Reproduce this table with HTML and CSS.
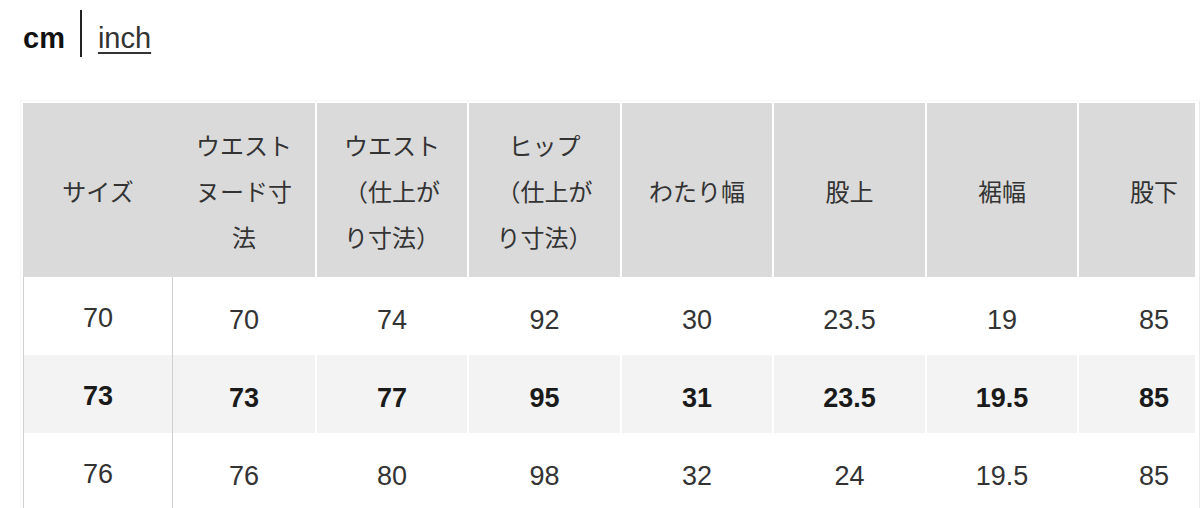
FILE: index.html
```html
<!DOCTYPE html>
<html lang="ja">
<head>
<meta charset="utf-8">
<title>サイズ表</title>
<link rel="stylesheet" href="styles.css">
</head>
<body>
<div class="unit-switch">
  <span class="unit unit-active">cm</span>
  <span class="unit-divider"></span>
  <a class="unit unit-link" href="#">inch</a>
</div>
<div class="table-frame">
  <div class="table-wrap">
    <table class="size-table">
      <colgroup>
        <col class="c-size">
        <col class="c-w2">
        <col class="c-a">
        <col class="c-b">
        <col class="c-a">
        <col class="c-b">
        <col class="c-a">
        <col class="c-a">
      </colgroup>
      <thead>
        <tr>
          <th class="first">サイズ</th>
          <th>ウエスト<br>ヌード寸<br>法</th>
          <th>ウエスト<br>（仕上が<br>り寸法）</th>
          <th>ヒップ<br>（仕上が<br>り寸法）</th>
          <th>わたり幅</th>
          <th>股上</th>
          <th>裾幅</th>
          <th>股下</th>
        </tr>
      </thead>
      <tbody>
        <tr>
          <td class="first">70</td><td>70</td><td>74</td><td>92</td><td>30</td><td>23.5</td><td>19</td><td>85</td>
        </tr>
        <tr class="current">
          <td class="first">73</td><td>73</td><td>77</td><td>95</td><td>31</td><td>23.5</td><td>19.5</td><td>85</td>
        </tr>
        <tr>
          <td class="first">76</td><td>76</td><td>80</td><td>98</td><td>32</td><td>24</td><td>19.5</td><td>85</td>
        </tr>
      </tbody>
    </table>
  </div>
</div>
</body>
</html>
```

FILE: styles.css
```css
html, body {
  margin: 0;
  padding: 0;
  background: #ffffff;
}

body {
  font-family: "Liberation Sans", "Noto Sans CJK JP", sans-serif;
  color: #333333;
  width: 1200px;
  height: 508px;
  overflow: hidden;
}

.unit-switch {
  display: flex;
  align-items: center;
  margin: 10px 0 0 23px;
  height: 47px;
}

.unit {
  font-size: 29px;
  line-height: 34px;
  margin-top: 8px;
}

.unit-active {
  font-weight: bold;
  color: #111111;
}

.unit-divider {
  width: 2px;
  height: 47px;
  background: #222222;
  margin: 0 16px 0 15px;
}

.unit-link {
  color: #333333;
  text-decoration: underline;
  text-decoration-thickness: 2px;
  text-underline-offset: 4px;
}

.table-frame {
  margin: 43px 0 0 20px;
  width: 1174px;
  padding: 2px;
  border: 1px solid #f6f6f6;
  border-right-color: #ececec;
  border-bottom: none;
}

.table-wrap {
  width: 1172px;
  overflow: hidden;
}

.size-table {
  border-collapse: separate;
  border-spacing: 0;
  table-layout: fixed;
  width: 1208px;
}

.c-size { width: 150px; }
.c-w2 { width: 144px; }
.c-a { width: 152px; }
.c-b { width: 153px; }

.size-table th {
  background: #dadada;
  font-family: "Noto Sans CJK JP", "Liberation Sans", sans-serif;
  font-weight: normal;
  font-size: 24px;
  line-height: 46px;
  height: 174px;
  padding: 2px 10px 0;
  box-sizing: border-box;
  text-align: center;
  vertical-align: middle;
  color: #333333;
  border-right: 2px solid #ffffff;
}

.size-table th.first {
  border-right: none;
}

.size-table td {
  height: 78px;
  box-sizing: border-box;
  padding: 8px 0 0;
  text-align: center;
  vertical-align: middle;
  font-size: 27px;
  color: #333333;
  border-right: 2px solid #ffffff;
}

.size-table td.first {
  border-left: 1px solid #cfcfcf;
  border-right: 1px solid #cfcfcf;
  padding: 4px 0 0;
}

.size-table tr.current td {
  background: #f3f3f3;
  font-weight: bold;
  color: #1a1a1a;
}
```
